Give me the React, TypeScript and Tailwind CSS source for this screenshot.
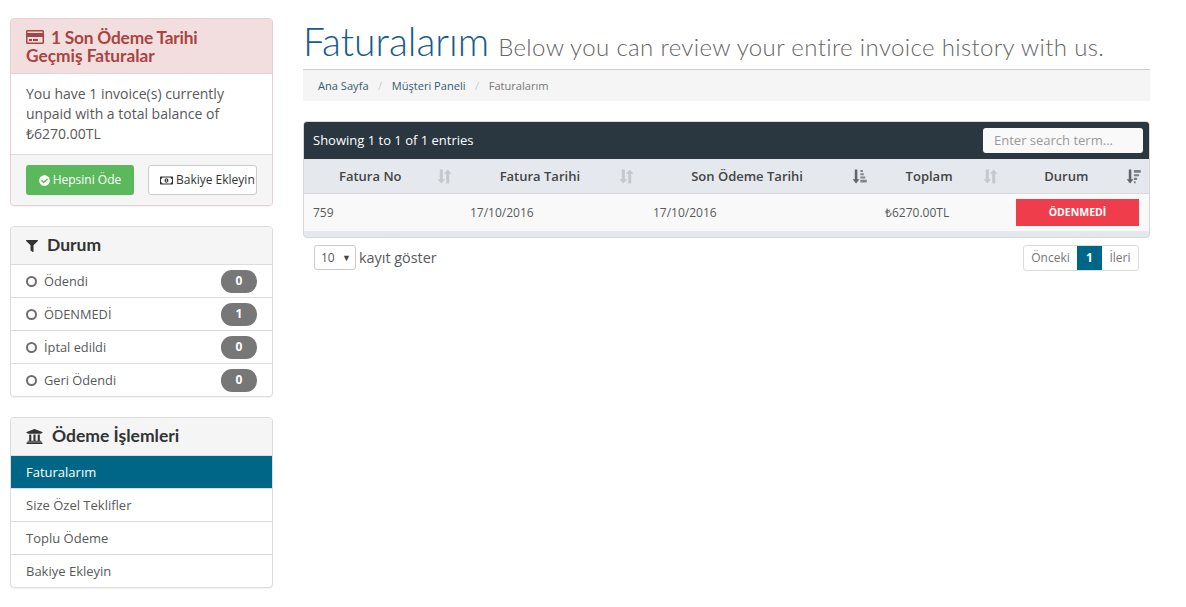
import type { ReactNode } from 'react'
import { FaCheckCircle, FaFilter, FaRegCreditCard, FaRegMoneyBillAlt, FaUniversity } from 'react-icons/fa'

const body = { fontFamily: '"Open Sans", sans-serif' }

/* sort glyphs: down arrow + up arrow, or down arrow + stacked bars */
function SortBoth() {
  return (
    <svg width="15" height="15" viewBox="0 0 14 14" className="text-[#c3c9ce]" fill="currentColor">
      <path d="M2.6 0.5h2.8v9h2.2L4 13.6 0.4 9.5h2.2z" />
      <path d="M8.6 13.5h2.8v-9h2.2L10 0.4 6.4 4.5h2.2z" />
    </svg>
  )
}

function SortAmount() {
  return (
    <svg width="15" height="15" viewBox="0 0 14 14" className="text-[#5f666c]" fill="currentColor">
      <path d="M2.6 0.5h2.4v9h2L3.8 13.6 0.6 9.5h2z" />
      <path d="M7.8 1h2.4v1.8H7.8zM7.8 4h3.2v1.8H7.8zM7.8 7h4.6v1.8H7.8zM7.8 10h6v2.6h-6z" opacity="0.75" />
    </svg>
  )
}

function SortWide() {
  return (
    <svg width="15" height="15" viewBox="0 0 14 14" className="text-[#5f666c]" fill="currentColor">
      <path d="M2.6 0.5h2.4v9h2L3.8 13.6 0.6 9.5h2z" />
      <path d="M7.4 1h6.4v2.4H7.4zM7.4 4.8h4.8v2H7.4zM7.4 8.2h3v2H7.4zM7.4 11.4h1.6v1.8H7.4z" opacity="0.8" />
    </svg>
  )
}

function Panel({ children }: { children: ReactNode }) {
  return (
    <div className="overflow-hidden rounded-[4px] border border-[#dddddd] bg-white shadow-[0_1px_1px_rgba(0,0,0,0.05)]">
      {children}
    </div>
  )
}

function PanelHead({ icon, title }: { icon: ReactNode; title: string }) {
  return (
    <div className="flex h-[38px] items-center border-b border-[#dddddd] bg-[#f5f5f5] pl-[15px] text-[17.5px] font-bold text-[#333333]" style={{ fontFamily: 'Lato, sans-serif' }}>
      {icon}
      <span>{title}</span>
    </div>
  )
}

const filters = [
  ['Ödendi', '0'],
  ['ÖDENMEDİ', '1'],
  ['İptal edildi', '0'],
  ['Geri Ödendi', '0'],
]

const actions = ['Faturalarım', 'Size Özel Teklifler', 'Toplu Ödeme', 'Bakiye Ekleyin']

const columns: [string, string, ReactNode][] = [
  ['w-[149px] pl-[35px] pr-[1px]', 'Fatura No', <SortBoth />],
  ['w-[183px] pl-[47px] pr-[1px]', 'Fatura Tarihi', <SortBoth />],
  ['w-[234px] pl-[56px] pr-[2px]', 'Son Ödeme Tarihi', <SortAmount />],
  ['w-[131px] pl-[37px] pr-[1px]', 'Toplam', <SortBoth />],
  ['w-[150px] pl-[45px] pr-[8px]', 'Durum', <SortWide />],
]

export default function App() {
  return (
    <div className="flex min-h-[607px] items-start bg-white pl-[10px] pt-[18px] text-[#58595b]" style={body}>
      <aside className="flex w-[263px] shrink-0 flex-col gap-[20px]">
        <div className="overflow-hidden rounded-[4px] border border-[#e7d0d2] bg-white shadow-[0_1px_1px_rgba(0,0,0,0.05)]">
          <div className="h-[55px] border-b border-[#e7d0d2] bg-[#f2dede] pl-[15px] pt-[9px] text-[17.3px] font-bold leading-[18px] text-[#a94442]" style={{ fontFamily: 'Lato, sans-serif' }}>
            <FaRegCreditCard className="mr-[7px] inline-block align-[-2px] text-[18px]" />
            <span className="tracking-[-0.2px]">1 Son Ödeme Tarihi</span>
            <br />
            Geçmiş Faturalar
          </div>
          <div className="h-[80px] pl-[15px] pr-[10px] pt-[10px] text-[14px] leading-[20px]">
            You have 1 invoice(s) currently unpaid with a total balance of ₺6270.00TL
          </div>
          <div className="flex h-[51px] items-start gap-[14px] border-t border-[#dddddd] bg-[#f5f5f5] pl-[15px] pt-[10px]">
            <div className="flex h-[30px] w-[108px] items-center justify-center gap-[3px] rounded-[3px] bg-[#5cb85c] text-[12px] text-white">
              <FaCheckCircle className="text-[11px]" />
              Hepsini Öde
            </div>
            <div className="flex h-[30px] w-[109px] items-center gap-[3px] rounded-[3px] border border-[#cccccc] bg-white pl-[11px] text-[12px] text-[#333333]">
              <FaRegMoneyBillAlt className="text-[13px]" />
              Bakiye Ekleyin
            </div>
          </div>
        </div>

        <Panel>
          <PanelHead icon={<FaFilter className="mr-[9px] text-[12px]" />} title="Durum" />
          {filters.map(([label, count], i) => (
            <div key={label} className={`flex items-center pl-[15px] pr-[15px] text-[12.8px] ${i > 0 ? 'h-[33px] border-t border-[#dddddd]' : 'h-[32px]'}`}>
              <span className="mr-[7px] h-[11px] w-[11px] rounded-full border-2 border-[#6e6e6e]" />
              <span className="flex-1 pt-[2px]">{label}</span>
              <span className="flex h-[23px] w-[36px] items-center justify-center rounded-[11px] bg-[#777777] text-[12px] font-bold text-white">
                {count}
              </span>
            </div>
          ))}
        </Panel>

        <Panel>
          <PanelHead icon={<FaUniversity className="mr-[9px] text-[17px]" />} title="Ödeme İşlemleri" />
          {actions.map((label, i) => (
            <div
              key={label}
              className={`flex items-center pl-[15px] pt-[2px] text-[13px] ${i === 0 ? 'h-[32px] bg-[#006687] text-white' : 'h-[33px] border-t border-[#dddddd]'}`}
            >
              {label}
            </div>
          ))}
        </Panel>
      </aside>

      <main className="ml-[30px] w-[847px] shrink-0">
        <h1 className="flex h-[51px] items-baseline whitespace-nowrap pt-[1px] leading-[44px]" style={{ fontFamily: 'Lato, sans-serif' }}>
          <span className="text-[39px] font-light text-[#175d85]">Faturalarım</span>
          <span className="ml-[9px] text-[24px] font-light tracking-[0.36px] text-[#666666]">
            Below you can review your entire invoice history with us.
          </span>
        </h1>
        <div className="flex h-[32px] items-center gap-[9.5px] border-t border-[#cccccc] bg-[#f5f5f5] pl-[15px] pt-[1px] text-[11.1px]">
          <span className="text-[#3b5a6e]">Ana Sayfa</span>
          <span className="text-[#cccccc]">/</span>
          <span className="text-[#3b5a6e]">Müşteri Paneli</span>
          <span className="text-[#cccccc]">/</span>
          <span className="text-[#777777]">Faturalarım</span>
        </div>

        <div className="mt-[20px] overflow-hidden rounded-[4px] border border-[#d5d9dc] bg-[#e5e9ee]">
          <div className="flex h-[37px] items-center justify-between bg-[#2a3640] pl-[9px] pr-[6px] text-[13px] font-medium text-white">
            <span>Showing 1 to 1 of 1 entries</span>
            <div className="flex h-[25px] w-[160px] items-center rounded-[3px] bg-[#f9f9f9] pl-[11px] text-[13px] font-normal text-[#999999]">
              Enter search term...
            </div>
          </div>
          <div className="flex h-[35px] border-b border-[#d5d9dc] pt-[1px] text-[13px] font-semibold text-[#444444]">
            {columns.map(([cls, label, icon]) => (
              <div key={label} className={`flex items-center justify-between ${cls}`}>
                <span>{label}</span>
                {icon}
              </div>
            ))}
          </div>
          <div className="flex h-[37px] items-center bg-[#f9f9f9] text-[12px]">
            <span className="w-[166px] pl-[9px]">759</span>
            <span className="w-[183px]">17/10/2016</span>
            <span className="w-[232px]">17/10/2016</span>
            <span className="w-[131px]">₺6270.00TL</span>
            <span className="flex h-[27px] w-[123px] items-center justify-center bg-[#ef3d4c] text-[10.5px] font-bold text-white">
              ÖDENMEDİ
            </span>
          </div>
          <div className="h-[6px]" />
        </div>

        <div className="mt-[7px] flex items-start justify-between pl-[11px] pr-[11px]">
          <div className="flex items-center gap-[3px] text-[14.4px]">
            <div className="flex h-[25px] w-[42px] items-center justify-between rounded-[3px] border border-[#cccccc] pl-[6px] pr-[4px] text-[12px]">
              10
              <span className="text-[9px] text-[#444444]">▼</span>
            </div>
            <span>kayıt göster</span>
          </div>
          <div className="flex h-[26px] overflow-hidden rounded-[3px] border border-[#dddddd] text-[12px] text-[#777777]">
            <span className="flex w-[53px] items-center justify-center">Önceki</span>
            <span className="flex w-[25px] items-center justify-center bg-[#006687] font-bold text-white">1</span>
            <span className="flex w-[36px] items-center justify-center">İleri</span>
          </div>
        </div>
      </main>
    </div>
  )
}
